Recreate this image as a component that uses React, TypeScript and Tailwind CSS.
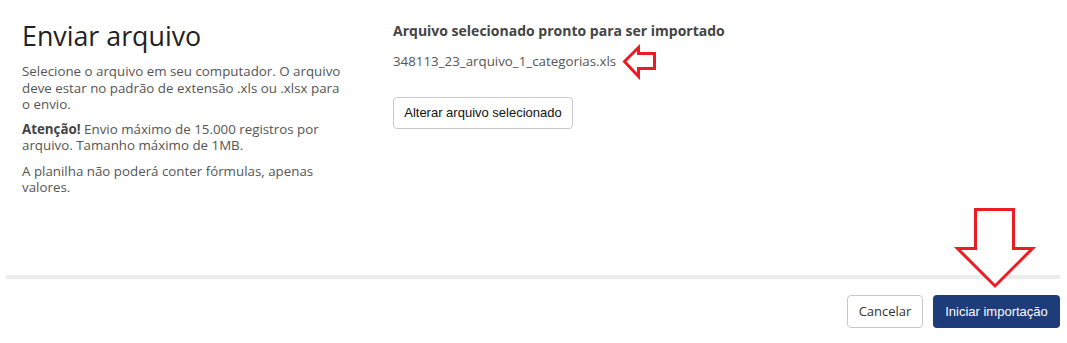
import React from "react";

export default function App() {
  const os = { fontFamily: '"Open Sans", "Noto Sans", sans-serif' };
  const ar = { fontFamily: '"Liberation Sans", Arial, sans-serif' };
  return (
    <div className="relative w-[1067px] h-[343px] bg-white overflow-hidden">
      <div className="flex h-[275px] pl-[22px]" style={os}>
        <div className="w-[371px] pt-[19px]">
          <h1 className="text-[26.8px] leading-[34px] text-[#222] font-normal">Enviar arquivo</h1>
          <div className="w-[326px] mt-[10px] text-[13.33px] leading-[16.5px] text-[#555]">
            <p>Selecione o arquivo em seu computador. O arquivo deve estar no padrão de extensão .xls ou .xlsx para o envio.</p>
            <p className="mt-[8px]"><b className="font-bold text-[#444]">Atenção!</b> Envio máximo de 15.000 registros por arquivo. Tamanho máximo de 1MB.</p>
            <p className="mt-[9px]">A planilha não poderá conter fórmulas, apenas valores.</p>
          </div>
        </div>
        <div className="pt-[22px]">
          <h2 className="text-[14px] leading-[18px] font-bold text-[#444]">Arquivo selecionado pronto para ser importado</h2>
          <div className="mt-[12px] text-[13.33px] leading-[18px] text-[#555]">348113_23_arquivo_1_categorias.xls</div>
          <button
            className="mt-[27px] h-[32px] w-[180px] border border-[#c8c8c8] rounded-[4px] bg-white text-[13px] text-[#111]"
            style={ar}
          >
            Alterar arquivo selecionado
          </button>
        </div>
      </div>
      <div className="ml-[6px] w-[1054px] h-[4px] bg-[#ececec]" />
      <div className="flex justify-end gap-[10px] pt-[16px] w-[1060px]">
        <button
          className="h-[33px] w-[76px] border border-[#c8c8c8] rounded-[4px] bg-white text-[13px] text-[#333]"
          style={os}
        >
          Cancelar
        </button>
        <button
          className="h-[33px] w-[127px] rounded-[4px] bg-[#1e3b7a] text-white text-[13px] font-medium"
          style={ar}
        >
          Iniciar importação
        </button>
      </div>

      <svg className="absolute left-0 top-0 pointer-events-none" width="1067" height="343">
        <polygon
          points="624.5,61.5 638.5,47.5 638.5,53.5 654.5,53.5 654.5,68.5 638.5,68.5 638.5,76.5"
          fill="white"
          stroke="#ea1c24"
          strokeWidth="3"
          strokeLinejoin="miter"
        />
        <polygon
          points="975.5,209.5 1013.5,209.5 1013.5,248.5 1032.5,248.5 995,286 957.5,248.5 975.5,248.5"
          fill="white"
          stroke="#ea1c24"
          strokeWidth="3"
          strokeLinejoin="miter"
        />
      </svg>
    </div>
  );
}
